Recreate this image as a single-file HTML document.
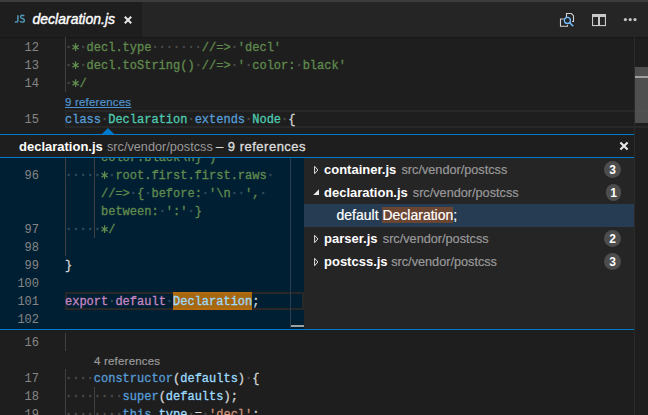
<!DOCTYPE html>
<html><head><meta charset="utf-8">
<style>
*{margin:0;padding:0;box-sizing:border-box}
html,body{width:648px;height:415px;overflow:hidden;background:#1e1e1e}
body{position:relative;font-family:"Liberation Sans",sans-serif}
.abs{position:absolute}
.ln,.cd{position:absolute;height:18px;line-height:18px;font-family:"Liberation Mono",monospace;font-size:12px;white-space:pre}
.ln{left:0;width:39px;text-align:right;color:#858585;-webkit-text-stroke-width:0.05px}
.cd{left:65px;color:#d4d4d4;-webkit-text-stroke-width:0.3px}
.w{color:rgba(227,228,226,0.16);-webkit-text-stroke-width:0.7px}
.cm{color:#608b4e}.kw{color:#569cd6}.ty{color:#4ec9b0}.pu{color:#d4d4d4}.st{color:#ce9178}.va{color:#9cdcfe}.ct{color:#c586c0}
.mh{background:rgba(255,143,0,0.65);display:inline-block;height:17px;vertical-align:top;box-shadow:0 -1px 0 rgba(255,143,0,0.65)}
.ast{display:inline-block;vertical-align:top;overflow:visible}
.guide{position:absolute;width:1px;background:#404040}
.lens{position:absolute;height:18px;line-height:18px;font-size:11.5px;letter-spacing:0.2px;color:#999;padding-top:0.5px;-webkit-text-stroke-width:0.2px}
</style></head><body>
<!-- top strip -->
<div class="abs" style="left:0;top:0;width:648px;height:2px;background:#3c3c3c"></div>
<!-- tab bar -->
<div class="abs" style="left:0;top:2px;width:648px;height:35px;background:#252526"></div>
<div class="abs" style="left:0;top:2px;width:142px;height:35px;background:#1e1e1e"></div>
<svg class="abs" style="left:14px;top:14.3px" width="12" height="10" viewBox="0 0 12 10"><path d="M3.9 1.2V6.4Q3.9 8.1 2.4 8.1Q1.6 8.1 1.1 7.6" fill="none" stroke="#519aba" stroke-width="1.5"/><path d="M10.2 2.1Q9.6 1.2 8.3 1.2Q6.6 1.2 6.6 2.7Q6.6 3.9 8.4 4.5Q10.4 5.1 10.4 6.5Q10.4 8.1 8.3 8.1Q6.7 8.1 6 7.1" fill="none" stroke="#519aba" stroke-width="1.4"/></svg>
<div class="abs" style="left:32.5px;top:11px;font-size:14px;font-style:italic;color:#fff;line-height:16px;-webkit-text-stroke:0.4px #fff">declaration.js</div>
<svg class="abs" style="left:122px;top:14px" width="12" height="12" viewBox="0 0 12 12"><path d="M2.8 2.8L9.2 9.2M9.2 2.8L2.8 9.2" stroke="#e8e8e8" stroke-width="2"/></svg>
<!-- top right icons -->
<svg class="abs" style="left:558px;top:11px" width="18" height="18" viewBox="0 0 18 18">
<path d="M8.5 6V2.5H13.3L15.5 4.7V10.5H14" fill="none" stroke="#d0d0d0" stroke-width="1.1"/>
<path d="M5.7 8H2.5V15.2H9.5V13.8" fill="none" stroke="#d0d0d0" stroke-width="1.1"/>
<circle cx="9.4" cy="9.4" r="3" fill="none" stroke="#75beff" stroke-width="1.3"/>
<path d="M11.6 11.6L15.2 15.2" stroke="#75beff" stroke-width="1.5"/>
</svg>
<svg class="abs" style="left:588px;top:10px" width="22" height="20" viewBox="0 0 22 20">
<rect x="4" y="4" width="14" height="3" fill="#c8c8c8"/>
<rect x="4" y="4" width="1.1" height="12" fill="#c8c8c8"/>
<rect x="16.9" y="4" width="1.1" height="12" fill="#c8c8c8"/>
<rect x="4" y="15" width="14" height="1.1" fill="#c8c8c8"/>
<rect x="10" y="4" width="2" height="12" fill="#c8c8c8"/>
</svg>
<svg class="abs" style="left:623px;top:17px" width="16" height="6" viewBox="0 0 16 6">
<circle cx="2.4" cy="2.6" r="1.6" fill="#c5c5c5"/><circle cx="7.2" cy="2.6" r="1.6" fill="#c5c5c5"/><circle cx="12" cy="2.6" r="1.6" fill="#c5c5c5"/>
</svg>

<!-- main editor -->
<div class="abs" style="left:0;top:37px;width:648px;height:2px;background:linear-gradient(#141414,#1e1e1e)"></div>
<div class="guide" style="left:65px;top:37px;height:55px"></div>
<div class="abs" style="left:65px;top:110px;width:590px;height:18px;border:2px solid #282828"></div>
<div class="lens" style="left:65px;top:92px;color:#4e94ce;text-decoration:underline">9 references</div>
<div class="ln" style="top:39px">12</div>
<div class="cd" style="top:39px"><span class="w">·</span><span class="cm"><svg class="ast" width="7.2" height="18" viewBox="0 0 7.2 18"><path d="M3.6 4.3V12.1M0.5 6.3L6.7 10.1M0.5 10.1L6.7 6.3" stroke="#608b4e" stroke-width="1.25"/></svg></span><span class="w">·</span><span class="cm">decl.type</span><span class="w">·······</span><span class="cm">//=&gt;</span><span class="w">·</span><span class="cm">&#x27;decl&#x27;</span></div>
<div class="ln" style="top:57px">13</div>
<div class="cd" style="top:57px"><span class="w">·</span><span class="cm"><svg class="ast" width="7.2" height="18" viewBox="0 0 7.2 18"><path d="M3.6 4.3V12.1M0.5 6.3L6.7 10.1M0.5 10.1L6.7 6.3" stroke="#608b4e" stroke-width="1.25"/></svg></span><span class="w">·</span><span class="cm">decl.toString()</span><span class="w">·</span><span class="cm">//=&gt;</span><span class="w">·</span><span class="cm">&#x27;</span><span class="w">·</span><span class="cm">color:</span><span class="w">·</span><span class="cm">black&#x27;</span></div>
<div class="ln" style="top:75px">14</div>
<div class="cd" style="top:75px"><span class="w">·</span><span class="cm"><svg class="ast" width="7.2" height="18" viewBox="0 0 7.2 18"><path d="M3.6 4.3V12.1M0.5 6.3L6.7 10.1M0.5 10.1L6.7 6.3" stroke="#608b4e" stroke-width="1.25"/></svg>/</span></div>
<div class="ln" style="top:111px">15</div>
<div class="cd" style="top:111px"><span class="kw">class</span><span class="w">·</span><span class="ty">Declaration</span><span class="w">·</span><span class="kw">extends</span><span class="w">·</span><span class="ty">Node</span><span class="w">·</span><span class="pu">{</span></div>
<!-- main scrollbar -->
<div class="abs" style="left:634px;top:37px;width:1px;height:378px;background:#2b2b2b"></div>
<div class="abs" style="left:635px;top:67px;width:13px;height:56px;background:rgba(100,100,100,0.7)"></div>
<div class="abs" style="left:635px;top:76px;width:13px;height:2px;background:#a0a0a0"></div>

<!-- bottom area -->
<div class="guide" style="left:65px;top:333px;height:18px"></div>
<div class="lens" style="left:94px;top:351px">4 references</div>
<div class="guide" style="left:65px;top:369px;height:46px"></div>
<div class="guide" style="left:94px;top:387px;height:28px"></div>
<div class="ln" style="top:334px">16</div>
<div class="cd" style="top:334px"></div>
<div class="ln" style="top:370px">17</div>
<div class="cd" style="top:370px"><span class="w">····</span><span class="kw">constructor</span><span class="pu">(</span><span class="va">defaults</span><span class="pu">)</span><span class="w">·</span><span class="pu">{</span></div>
<div class="ln" style="top:388px">18</div>
<div class="cd" style="top:388px"><span class="w">········</span><span class="kw">super</span><span class="pu">(</span><span class="va">defaults</span><span class="pu">);</span></div>
<div class="ln" style="top:406px">19</div>
<div class="cd" style="top:406px"><span class="w">········</span><span class="kw">this</span><span class="pu">.</span><span class="va">type</span><span class="w">·</span><span class="pu">=</span><span class="w">·</span><span class="st">&#x27;decl&#x27;</span><span class="pu">;</span></div>

<!-- peek widget -->
<svg class="abs" style="left:102px;top:128px" width="12" height="6" viewBox="0 0 12 6"><path d="M0 6L6 0L12 6Z" fill="#007acc"/></svg>
<div class="abs" style="left:0;top:134px;width:634px;height:1px;background:#007acc"></div>
<div class="abs" style="left:0;top:135px;width:634px;height:22px;background:#1e1e1e"></div>
<div class="abs" style="left:0;top:157px;width:634px;height:1px;background:#007acc"></div>
<div class="abs" style="left:19px;top:138px;height:18px;line-height:18px;white-space:pre;font-size:13px;color:#fff;font-weight:bold">declaration.js</div>
<div class="abs" style="left:107px;top:138px;height:18px;line-height:18px;white-space:pre;font-size:12.7px;color:#999">src/vendor/postcss</div>
<div class="abs" style="left:216px;top:138px;height:18px;line-height:18px;white-space:pre;font-size:13px;letter-spacing:0.5px;color:#dcdcdc;-webkit-text-stroke:0.35px #dcdcdc">– 9 references</div>
<svg class="abs" style="left:619px;top:141px" width="10" height="10" viewBox="0 0 10 10"><path d="M1.4 1.4L8.6 8.6M8.6 1.4L1.4 8.6" stroke="#e8e8e8" stroke-width="2.1"/></svg>
<div class="abs" style="left:0;top:329px;width:634px;height:1px;background:#007acc"></div>

<!-- peek body -->
<div class="abs" id="peekbody" style="left:0;top:158px;width:634px;height:171px;overflow:hidden">
  <div class="abs" style="left:0;top:0;width:304px;height:171px;background:#001f33;overflow:hidden">
    <div class="abs" style="left:0;top:-158px;width:304px;height:415px">
      <div class="guide" style="left:65px;top:148px;height:108px"></div>
      <div class="guide" style="left:94px;top:148px;height:90px"></div>
      <div class="abs" style="left:65px;top:292px;width:239px;height:18px;border:2px solid #282828"></div>
      <div class="cd" style="top:149px">     <span class="cm">color:black\n}&#x27;)</span></div>
<div class="ln" style="top:167px">96</div>
<div class="cd" style="top:167px"><span class="w">·····</span><span class="cm"><svg class="ast" width="7.2" height="18" viewBox="0 0 7.2 18"><path d="M3.6 4.3V12.1M0.5 6.3L6.7 10.1M0.5 10.1L6.7 6.3" stroke="#608b4e" stroke-width="1.25"/></svg></span><span class="w">·</span><span class="cm">root.first.first.raws</span><span class="w">·</span></div>
<div class="cd" style="top:185px">     <span class="cm">//=&gt;</span><span class="w">·</span><span class="cm">{</span><span class="w">·</span><span class="cm">before:</span><span class="w">·</span><span class="cm">&#x27;\n</span><span class="w">··</span><span class="cm">&#x27;,</span><span class="w">·</span></div>
<div class="cd" style="top:203px">     <span class="cm">between:</span><span class="w">·</span><span class="cm">&#x27;:&#x27;</span><span class="w">·</span><span class="cm">}</span></div>
<div class="ln" style="top:221px">97</div>
<div class="cd" style="top:221px"><span class="w">·····</span><span class="cm"><svg class="ast" width="7.2" height="18" viewBox="0 0 7.2 18"><path d="M3.6 4.3V12.1M0.5 6.3L6.7 10.1M0.5 10.1L6.7 6.3" stroke="#608b4e" stroke-width="1.25"/></svg>/</span></div>
<div class="ln" style="top:239px">98</div>
<div class="cd" style="top:239px"></div>
<div class="ln" style="top:257px">99</div>
<div class="cd" style="top:257px"><span class="pu">}</span></div>
<div class="ln" style="top:275px">100</div>
<div class="cd" style="top:275px"></div>
<div class="ln" style="top:293px">101</div>
<div class="cd" style="top:293px"><span class="ct">export</span><span class="w">·</span><span class="ct">default</span><span class="w">·</span><span class="va"><span class="mh">Declaration</span></span><span class="pu">;</span></div>
<div class="ln" style="top:311px">102</div>
<div class="cd" style="top:311px"></div>
      <div class="abs" style="left:290px;top:158px;width:1px;height:170px;background:#2b3d4c"></div>
      <div class="abs" style="left:291px;top:325px;width:13px;height:2px;background:#a0a0a0"></div>
    </div>
  </div>
  <div class="abs" style="left:304px;top:0;width:330px;height:171px;background:#252526">
  </div>
</div>
<div class="abs" id="refs" style="left:304px;top:158px;width:330px;height:171px;font-size:13px;color:#fff">
  <div class="abs" style="left:0;top:46px;width:330px;height:23px;background:#263c52"></div>
  <div class="abs" style="left:20px;top:0px;height:23px;line-height:23px;white-space:pre;font-weight:bold">container.js</div>
  <div class="abs" style="left:97.5px;top:1px;height:23px;line-height:23px;white-space:pre;font-size:12.7px;color:#999;-webkit-text-stroke:0.2px #999">src/vendor/postcss</div>
  <div class="abs" style="left:20px;top:23px;height:23px;line-height:23px;white-space:pre;font-weight:bold">declaration.js</div>
  <div class="abs" style="left:108.8px;top:24px;height:23px;line-height:23px;white-space:pre;font-size:12.7px;color:#999;-webkit-text-stroke:0.2px #999">src/vendor/postcss</div>
  <div class="abs" style="left:32.5px;top:46px;height:23px;line-height:23px;white-space:pre;font-size:14px;-webkit-text-stroke:0.2px #fff">default <span style="background:#694532">Declaration</span>;</div>
  <div class="abs" style="left:20px;top:69px;height:23px;line-height:23px;white-space:pre;font-weight:bold">parser.js</div>
  <div class="abs" style="left:78.8px;top:70px;height:23px;line-height:23px;white-space:pre;font-size:12.7px;color:#999;-webkit-text-stroke:0.2px #999">src/vendor/postcss</div>
  <div class="abs" style="left:20px;top:92px;height:23px;line-height:23px;white-space:pre;font-weight:bold">postcss.js</div>
  <div class="abs" style="left:87.2px;top:93px;height:23px;line-height:23px;white-space:pre;font-size:12.7px;color:#999;-webkit-text-stroke:0.2px #999">src/vendor/postcss</div>
  <svg class="abs" style="left:9px;top:7px" width="7" height="10" viewBox="0 0 7 10"><path d="M1.6 1.3L4.9 5L1.6 8.7Z" fill="none" stroke="#e0e0e0" stroke-width="1" stroke-linejoin="miter"/></svg>
  <svg class="abs" style="left:9px;top:76px" width="7" height="10" viewBox="0 0 7 10"><path d="M1.6 1.3L4.9 5L1.6 8.7Z" fill="none" stroke="#e0e0e0" stroke-width="1" stroke-linejoin="miter"/></svg>
  <svg class="abs" style="left:9px;top:99px" width="7" height="10" viewBox="0 0 7 10"><path d="M1.6 1.3L4.9 5L1.6 8.7Z" fill="none" stroke="#e0e0e0" stroke-width="1" stroke-linejoin="miter"/></svg>
  <svg class="abs" style="left:8px;top:30px" width="8" height="8" viewBox="0 0 8 8"><path d="M7 1.2V7H1.2Z" fill="#e8e8e8"/></svg>
  <div class="abs" style="left:300px;top:3px;width:17px;height:17px;border-radius:9px;background:#4d4d4d;font-size:12px;font-weight:bold;text-align:center;line-height:17px;padding-top:1px">3</div>
  <div class="abs" style="left:302px;top:26px;width:15px;height:17px;border-radius:9px;background:#4d4d4d;font-size:12px;font-weight:bold;text-align:center;line-height:17px;padding-top:1px">1</div>
  <div class="abs" style="left:300px;top:72px;width:17px;height:17px;border-radius:9px;background:#4d4d4d;font-size:12px;font-weight:bold;text-align:center;line-height:17px;padding-top:1px">2</div>
  <div class="abs" style="left:300px;top:95px;width:17px;height:17px;border-radius:9px;background:#4d4d4d;font-size:12px;font-weight:bold;text-align:center;line-height:17px;padding-top:1px">3</div>
</div>
</body></html>
